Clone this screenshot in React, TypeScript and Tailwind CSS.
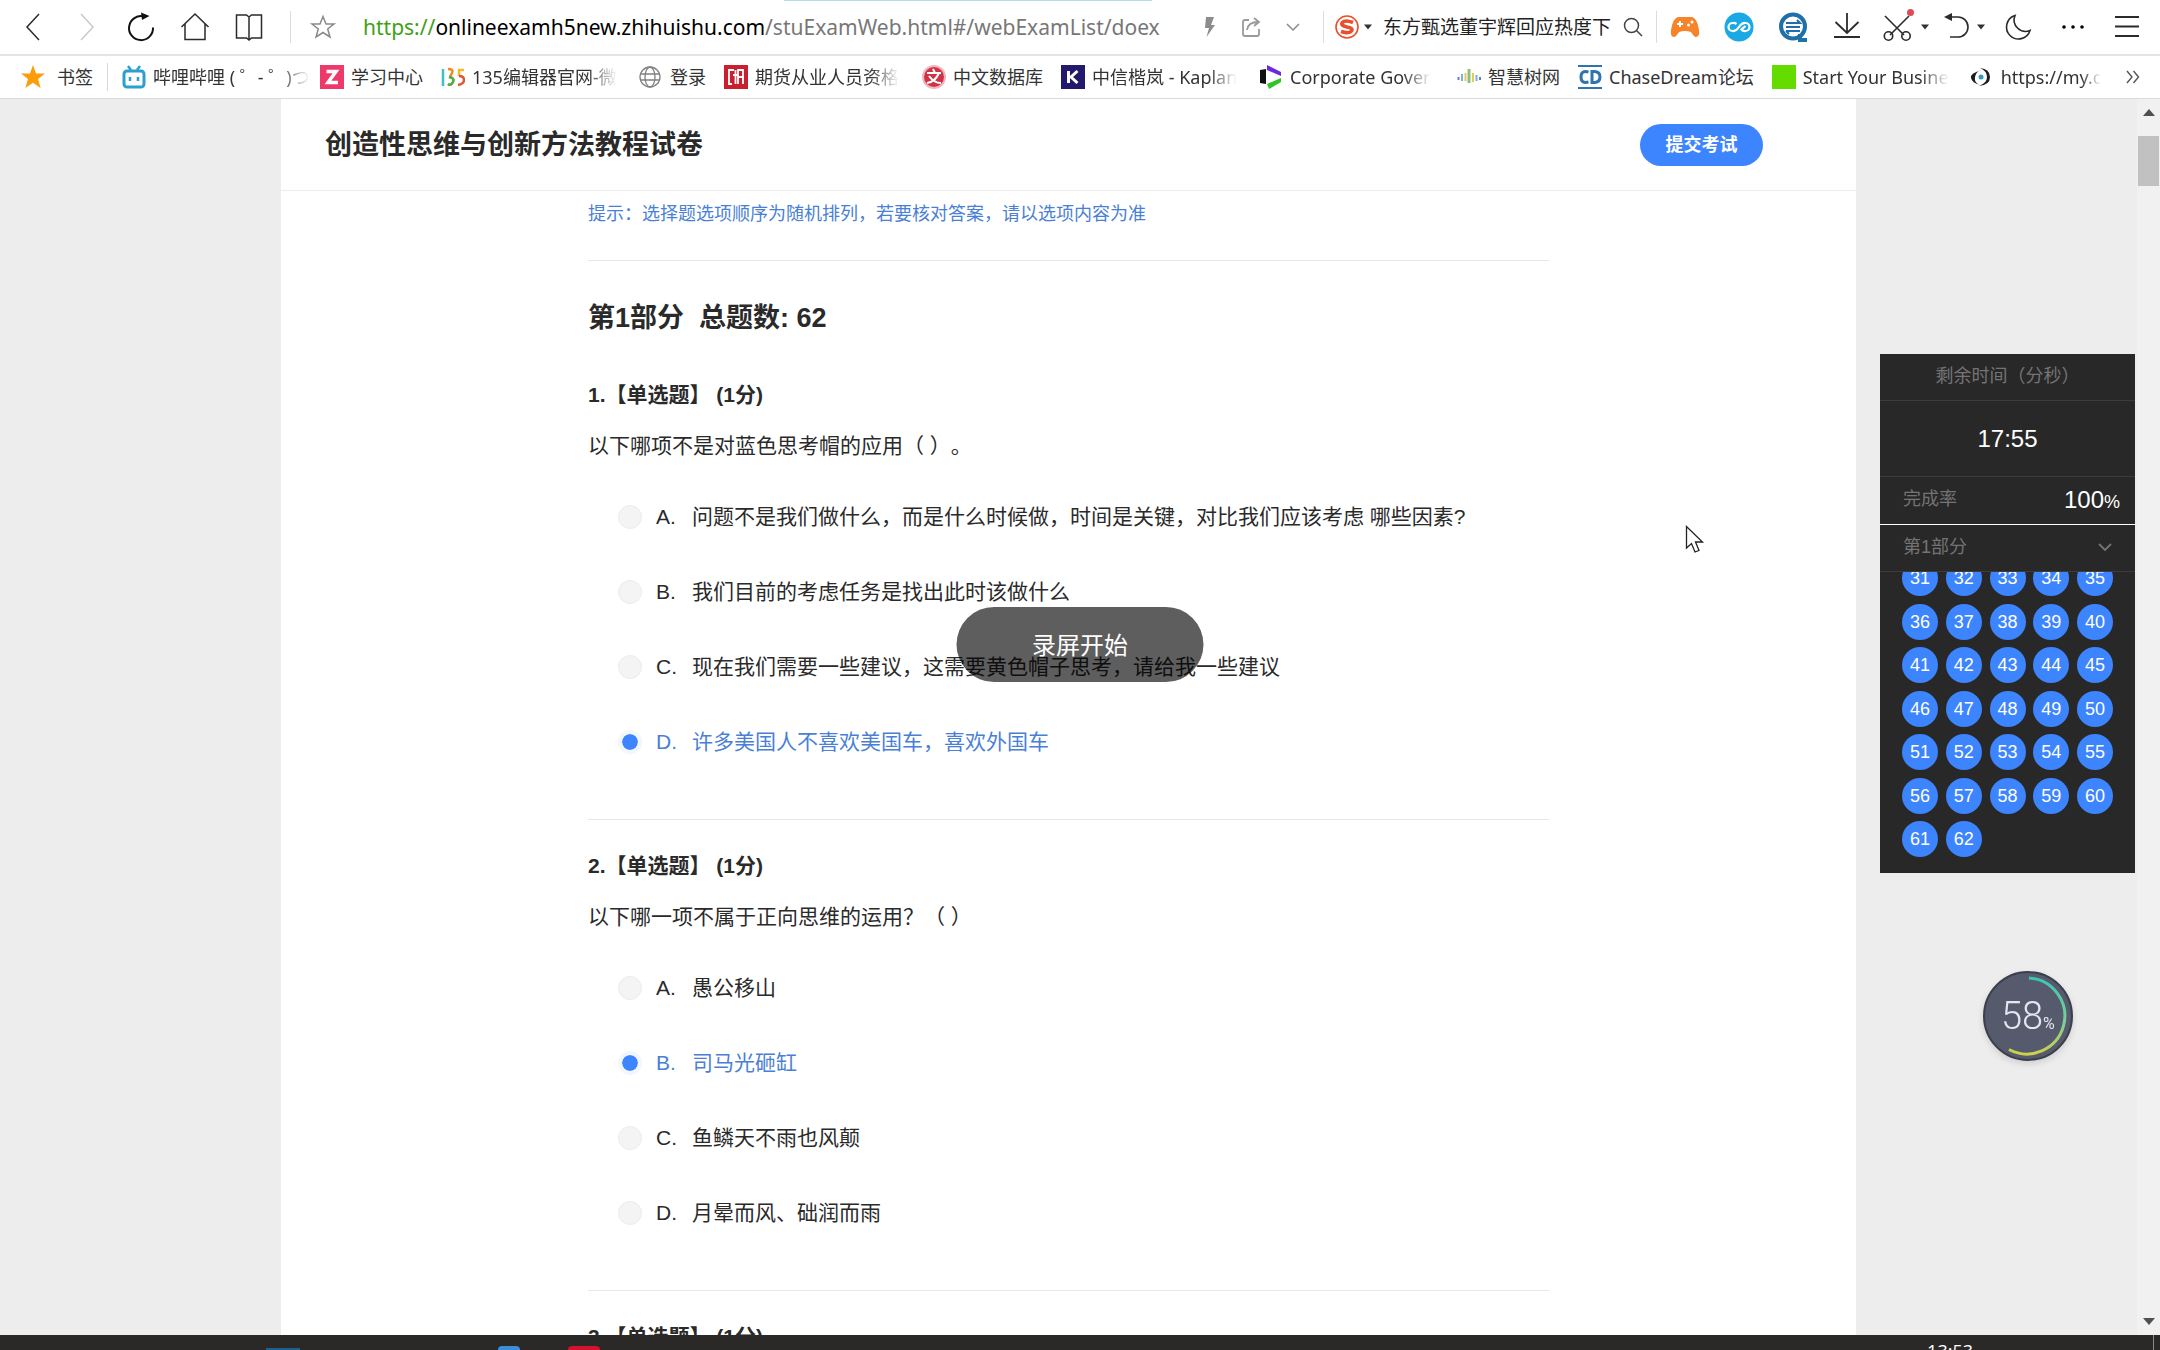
import { useState, type ReactNode } from "react";

type Option = { key: string; text: string };
type Question = { no: number; title: string; options: Option[]; answer: string };

const questions: Question[] = [
    {
        no: 1,
        title: "以下哪项不是对蓝色思考帽的应用（ ）。",
        answer: "D",
        options: [
            { key: "A", text: "问题不是我们做什么，而是什么时候做，时间是关键，对比我们应该考虑 哪些因素?" },
            { key: "B", text: "我们目前的考虑任务是找出此时该做什么" },
            { key: "C", text: "现在我们需要一些建议，这需要黄色帽子思考，请给我一些建议" },
            { key: "D", text: "许多美国人不喜欢美国车，喜欢外国车" },
        ],
    },
    {
        no: 2,
        title: "以下哪一项不属于正向思维的运用？（ ）",
        answer: "B",
        options: [
            { key: "A", text: "愚公移山" },
            { key: "B", text: "司马光砸缸" },
            { key: "C", text: "鱼鳞天不雨也风颠" },
            { key: "D", text: "月晕而风、础润而雨" },
        ],
    },
    { no: 3, title: "", answer: "", options: [] },
];

const cards = Array.from({ length: 32 }, (_, i) => i + 31);

/* ---------- browser chrome ---------- */

function ToolButton({ label, className = "", children }: { label: string; className?: string; children: ReactNode }) {
    return (
        <button aria-label={label} className={`flex h-[30px] shrink-0 items-center justify-center ${className}`}>
            {children}
        </button>
    );
}

function Line({ d, size = 30, color = "#2b2b2b", width = 1.5 }: { d: string; size?: number; color?: string; width?: number }) {
    return (
        <svg width={size} height="30" viewBox={`0 0 ${size} 30`} fill="none" stroke={color} strokeWidth={width}>
            <path d={d} />
        </svg>
    );
}

function Caret() {
    return (
        <svg width="10" height="6" viewBox="0 0 10 6" className="shrink-0">
            <path d="M1 0.5h8L5 5.5z" fill="#333" />
        </svg>
    );
}

function Divider() {
    return <div className="h-8 w-px shrink-0 bg-[#dcdcdc]" />;
}

function Toolbar() {
    return (
        <div className="flex h-[56px] shrink-0 items-center border-b-2 border-[#e4e4e4] bg-white pl-[18px] pr-[18px]">
            <div className="flex items-center gap-6">
                <ToolButton label="后退"><Line d="M21 2L9 15L21 28" /></ToolButton>
                <ToolButton label="前进"><Line d="M9 2L21 15L9 28" color="#c9c9c9" /></ToolButton>
                <ToolButton label="刷新">
                    <svg width="30" height="30" viewBox="0 0 30 30" fill="none">
                        <path d="M18 4.5A12 12 0 1 0 27 15.5" stroke="#111" strokeWidth="2" />
                        <path d="M15 0.5l8.5 3.5L16 8z" fill="#111" />
                    </svg>
                </ToolButton>
                <ToolButton label="主页"><Line d="M1.5 15L15 2L28.5 15M5 12V27.5H25V12" /></ToolButton>
                <ToolButton label="阅读">
                    <Line d="M15 5L12.500 3H2.500V26H12.500L15 28L17.500 26H27.500V3H17.500L15 5V28" />
                </ToolButton>
            </div>
            <div className="ml-[26px] mr-[18px]"><Divider /></div>
            <ToolButton label="收藏">
                <svg width="28" height="28" viewBox="0 0 28 28" fill="none" stroke="#8a8a8a" strokeWidth="1.5">
                    <path d="M14 3.500L17 11h8l-6.300 5 2.300 8L14 19.500 7 24l2.300-8L3 11h8z" />
                </svg>
            </ToolButton>
            <div className="ml-[26px] min-w-0 flex-1 overflow-hidden whitespace-nowrap text-[21px] leading-7 text-[#777]">
                <span className="text-[#3fa018]">https://</span>
                <span className="text-black">onlineexamh5new.zhihuishu.com</span>
                /stuExamWeb.html#/webExamList/doex
            </div>
            <div className="ml-[22px] flex items-center gap-3">
                <ToolButton label="极速模式">
                    <svg width="30" height="30" viewBox="0 0 30 30"><path d="M12 5h8l-3 8h4L12.500 25l2.500-9h-4z" fill="#8c8c8c" /></svg>
                </ToolButton>
                <ToolButton label="分享">
                    <Line color="#9a9a9a" width={1.8} d="M13 8H9Q7 8 7 10V22Q7 24 9 24H21Q23 24 23 22V17M11 18Q12 10 22 10M18 6L23 10L18 14" />
                </ToolButton>
                <ToolButton label="展开"><Line color="#8a8a8a" d="M9 12L15 18L21 12" /></ToolButton>
            </div>
            <div className="ml-[15px] mr-[11px]"><Divider /></div>
            <svg width="24" height="26" viewBox="0 0 24 26" fill="none" className="shrink-0">
                <circle cx="12" cy="13" r="11" stroke="#e8502d" strokeWidth="1.600" />
                <path d="M18 8.500Q10 5.500 7.500 8.500T12 13Q18.500 14 16.500 17T6 17.500" stroke="#e8502d" strokeWidth="3.600" />
            </svg>
            <div className="ml-1 mr-[10px]"><Caret /></div>
            <span className="whitespace-nowrap text-[19px] leading-7 text-[#222]">东方甄选董宇辉回应热度下</span>
            <ToolButton label="搜索" className="ml-3">
                <svg width="20" height="20" viewBox="0 0 20 20" fill="none" stroke="#444" strokeWidth="1.500">
                    <circle cx="8.500" cy="8.500" r="7" /><path d="M13.500 13.500L19 19" />
                </svg>
            </ToolButton>
            <div className="ml-[13px] mr-[13px]"><Divider /></div>
            <div className="flex items-center gap-6">
                <ToolButton label="游戏">
                    <svg width="30" height="30" viewBox="0 0 30 30">
                        <path d="M8 5H22Q27 6 29 18Q30 25 26 25Q24 25 21 20Q15 18 9 20Q6 25 4 25Q0 25 1 18Q3 6 8 5z" fill="#f5842a" />
                        <path d="M10 9v6M7 12h6" stroke="#fff" strokeWidth="2" />
                        <circle cx="22" cy="10" r="1.500" fill="#fff" /><circle cx="18.500" cy="13" r="1.500" fill="#fff" />
                    </svg>
                </ToolButton>
                <ToolButton label="网盘">
                    <svg width="30" height="30" viewBox="0 0 30 30" fill="none">
                        <circle cx="15" cy="15" r="14.500" fill="#1ba9e4" />
                        <path d="M12.500 12Q10.500 10.500 8.500 11A4 4 0 0 0 8.500 19Q12 19.500 15 15Q18 10.500 21.500 11A4 4 0 0 1 21.500 19Q19 19.500 17.500 17.500L21.500 14" stroke="#fff" strokeWidth="2.200" />
                    </svg>
                </ToolButton>
                <ToolButton label="翻译">
                    <svg width="30" height="30" viewBox="0 0 30 30" fill="none">
                        <circle cx="15" cy="14.500" r="12" stroke="#1f6fa8" strokeWidth="4" />
                        <path d="M22 22v6h7" stroke="#1f6fa8" strokeWidth="4" />
                        <path d="M8 11h14l-3-3M22 15H8M8 19h14M8 19l3 3" stroke="#1f6fa8" strokeWidth="2" />
                    </svg>
                </ToolButton>
                <ToolButton label="下载"><Line d="M15 1V20M3.500 10L15 21L26.500 10M2 25H28" width={1.8} /></ToolButton>
            </div>
            <div className="ml-[20px] flex items-center gap-[6px]">
                <ToolButton label="截图">
                    <svg width="32" height="36" viewBox="0 0 32 36" fill="none" stroke="#2b2b2b" strokeWidth="1.600">
                        <path d="M3 7L22 26M27 7L8 26" />
                        <circle cx="6.500" cy="27" r="4.200" /><circle cx="24" cy="27" r="4.200" />
                        <circle cx="28.500" cy="3.500" r="3.500" fill="#e04a55" stroke="none" />
                    </svg>
                </ToolButton>
                <Caret />
            </div>
            <div className="ml-[14px] flex items-center gap-[6px]">
                <ToolButton label="恢复">
                    <svg width="26" height="30" viewBox="0 0 26 30" fill="none">
                        <path d="M4 5H14A10 10 0 0 1 14 25H6" stroke="#2b2b2b" strokeWidth="1.600" />
                        <path d="M0 5L8 1v8z" fill="#2b2b2b" />
                    </svg>
                </ToolButton>
                <Caret />
            </div>
            <div className="ml-[18px] flex items-center gap-6">
                <ToolButton label="夜间"><Line width={1.6} d="M11 3.500A12 12 0 1 0 26 18.500A11.500 11.500 0 0 1 11 3.500z" /></ToolButton>
                <ToolButton label="更多">
                    <svg width="30" height="30" viewBox="0 0 30 30"><circle cx="6" cy="15" r="1.800" /><circle cx="15" cy="15" r="1.800" /><circle cx="24" cy="15" r="1.800" /></svg>
                </ToolButton>
                <ToolButton label="菜单"><Line width={1.8} d="M3 5H27M3 14.500H27M3 24H27" /></ToolButton>
            </div>
        </div>
    );
}

const bookmarks: { text: string; fade: boolean; icon: ReactNode }[] = [
    {
        text: "哔哩哔哩 ( ゜- ゜)つ", fade: true,
        icon: (
            <g fill="none" stroke="#2aa0cc">
                <rect x="2" y="6" width="20" height="16" rx="3" strokeWidth="3" />
                <path d="M6 1l3 4M18 1l-3 4" strokeWidth="2.500" />
                <path d="M8 12v4M16 12v4" strokeWidth="2.500" />
            </g>
        ),
    },
    { text: "学习中心", fade: false, icon: <><rect width="24" height="24" fill="#ee3a6a" /><path d="M6.500 6.500H16L8 17.500H18" stroke="#fff" strokeWidth="3.500" fill="none" /></> },
    {
        text: "135编辑器官网-微", fade: true,
        icon: (
            <g fill="none" strokeWidth="2.500">
                <path d="M2 4v17" stroke="#3fc0c8" />
                <path d="M7 4q6 0 4 4t-3 4q6 1 4 5t-5 2" stroke="#f08a24" />
                <path d="M8 12q6 1 4 5t-5 2" stroke="#4cb050" />
                <path d="M23 5h-5v6" stroke="#f5b92e" /><path d="M18 11q5 0 5 4t-6 5" stroke="#e05535" />
            </g>
        ),
    },
    {
        text: "登录", fade: false,
        icon: (
            <g fill="none" stroke="#808080" strokeWidth="1.300">
                <circle cx="11" cy="12" r="10" /><ellipse cx="11" cy="12" rx="5" ry="10" /><path d="M1.500 9h19M1.500 15h19" />
            </g>
        ),
    },
    { text: "期货从业人员资格", fade: true, icon: <><rect width="24" height="24" fill="#c8202f" /><path d="M10 5H5V19H8M9 10h5M11.500 5V19M14 19V5H19V19M14 12h5" stroke="#fff" strokeWidth="1.800" fill="none" /></> },
    {
        text: "中文数据库", fade: false,
        icon: <><circle cx="12" cy="12" r="12" fill="#f3b5bf" /><circle cx="12" cy="12" r="10" fill="#cf3348" /><path d="M5 8h14M11 4l2 4M17 8Q13 17 5 18M7 11Q12 18 19 18" stroke="#fff" strokeWidth="2" fill="none" /></>,
    },
    { text: "中信楷岚 - Kaplan", fade: true, icon: <><rect width="24" height="24" fill="#241a6b" /><path d="M7.500 6v12M16.500 6L10 12l6.500 6" stroke="#fff" strokeWidth="3" fill="none" /></> },
    { text: "Corporate Gover", fade: true, icon: <><path d="M1 5L7 4V19L1 18z" fill="#111" /><path d="M8 0L22 7V11L8 5z" fill="#6a2ae0" /><path d="M22 13V17L10 24L8 19z" fill="#30c526" /></> },
    {
        text: "智慧树网", fade: false,
        icon: (
            <g fill="none" strokeWidth="2">
                <path d="M1.500 12v3M23 12v3" stroke="#6a7fc0" /><path d="M5 9v7M19.500 10v6" stroke="#7fb2d8" />
                <path d="M8.500 8v8M16 8v9" stroke="#e3c95a" /><path d="M12 4v14" stroke="#8ec07a" strokeWidth="3" />
            </g>
        ),
    },
    {
        text: "ChaseDream论坛", fade: false,
        icon: <g fill="none" stroke="#2f74ad"><path d="M0 1h24M0 23h24" strokeWidth="2" /><path d="M10.500 7Q3 5 3 12T10.500 17M14 6.500V17.500H17Q22 17 22 12T17 6.500z" strokeWidth="3" /></g>,
    },
    { text: "Start Your Busine", fade: true, icon: <rect width="24" height="24" fill="#64dc00" /> },
    {
        text: "https://my.c", fade: true,
        icon: <><path d="M12 5Q6 6 5 12T10 20Q2 18 1 13T12 5zM10 3Q20 4 20 12T9 21Q17 18 17 12T10 3z" fill="#1c1c1c" /><circle cx="11" cy="12" r="2.500" fill="#2f9fb5" /></>,
    },
];

function BookmarkBar() {
    return (
        <nav className="flex h-[43px] shrink-0 items-center border-b border-[#dadada] bg-white pl-[21px] pr-[20px] text-[18px] leading-7 text-[#333]">
            <svg width="24" height="24" viewBox="0 0 24 24" className="shrink-0">
                <path d="M12 0l3 8.500h9l-7 5.500 2.600 9L12 17.700 4.400 23 7 14 0 8.500h9z" fill="#fb9d0b" />
            </svg>
            <span className="ml-3 shrink-0">书签</span>
            <div className="mx-[14px] h-7 w-px shrink-0 bg-[#d8d8d8]" />
            <div className="flex min-w-0 flex-1 gap-[18px]">
                {bookmarks.map((b) => (
                    <a key={b.text} href="#" className={`flex shrink-0 items-center gap-[7px] ${b.fade ? "w-[180px] last:w-auto" : ""}`}>
                        <svg width="24" height="24" viewBox="0 0 24 24" className="shrink-0">{b.icon}</svg>
                        <span className={`whitespace-nowrap ${b.fade ? "[mask-image:linear-gradient(to_right,black_80%,transparent)]" : ""}`}>
                            {b.text}
                        </span>
                    </a>
                ))}
            </div>
            <button aria-label="更多书签" className="ml-5 shrink-0">
                <svg width="14" height="14" viewBox="0 0 14 14" fill="none" stroke="#555" strokeWidth="1.400">
                    <path d="M1 1l5 6-5 6M7.500 1l5 6-5 6" />
                </svg>
            </button>
        </nav>
    );
}

/* ---------- exam paper ---------- */

function QuestionBlock({ q }: { q: Question }) {
    const [answer, setAnswer] = useState(q.answer);

    return (
        <fieldset className="border-b border-[#e8e8e8] pb-10">
            <legend className="text-[21px] font-bold leading-[30px] text-[#2a2a2a]">{q.no}.【单选题】 (1分)</legend>
            <p className="mt-[21px] h-[30px] text-[21px] leading-[30px] text-[#2a2a2a]">{q.title}</p>
            <div className="mt-[18px] pl-[30px]">
                {q.options.map((o) => {
                    const checked = answer === o.key;
                    return (
                        <label key={o.key} className={`flex h-[75px] items-center text-[21px] leading-[30px] ${checked ? "text-[#4a7fd6]" : "text-[#2a2a2a]"}`}>
                            <input
                                type="radio"
                                name={`q${q.no}`}
                                checked={checked}
                                onChange={() => setAnswer(o.key)}
                                className="size-6 shrink-0 appearance-none rounded-full border border-[#ececec] bg-[#f4f4f4] checked:border-4 checked:border-[#f1f6ff] checked:bg-[#3d84ff] checked:bg-clip-padding"
                            />
                            <span className="ml-[14px] w-9">{o.key}.</span>
                            <span>{o.text}</span>
                        </label>
                    );
                })}
            </div>
        </fieldset>
    );
}

function AnswerCard() {
    return (
        <aside className="absolute right-[2px] top-[255px] flex w-[255px] flex-col bg-[#282828] text-[18px] text-[#747474]">
            <div className="h-[47px] border-b border-[#3c3c3c] text-center leading-[44px]">剩余时间（分秒）</div>
            <div className="h-[76px] border-b border-[#3c3c3c] text-center text-[24px] leading-[76px] text-white">17:55</div>
            <div className="flex h-[48px] items-center justify-between border-b border-white pb-[2px] pl-[23px] pr-[15px]">
                <span>完成率</span>
                <span className="text-[24px] text-white">100<span className="text-[18px]">%</span></span>
            </div>
            <button className="flex h-[47px] items-center justify-between border-b border-[#3c3c3c] px-[23px] pb-[2px]">
                <span>第1部分</span>
                <svg width="14" height="10" viewBox="0 0 14 10" fill="none" stroke="#747474" strokeWidth="1.800">
                    <path d="M1 2l6 6 6-6" />
                </svg>
            </button>
            <div className="flex h-[301px] flex-col justify-end overflow-hidden px-[22px] pb-4">
                <div className="grid h-[297px] shrink-0 grid-cols-[repeat(5,36px)] content-between justify-between">
                    {cards.map((n) => (
                        <button key={n} className="size-9 rounded-full bg-[#3d84ff] text-center leading-9 text-white">{n}</button>
                    ))}
                </div>
            </div>
        </aside>
    );
}

function SpeedBall() {
    return (
        <svg width="110" height="110" viewBox="-55 -55 110 110" className="absolute bottom-[264px] right-[54px] drop-shadow-md">
            <defs>
                <linearGradient id="arc" x1="0" y1="0" x2="0" y2="1">
                    <stop offset="0" stopColor="#3fc4b4" />
                    <stop offset="0.600" stopColor="#7fce94" />
                    <stop offset="1" stopColor="#cfd04a" />
                </linearGradient>
            </defs>
            <circle r="44" fill="#555b6c" stroke="#3c404c" strokeWidth="2" />
            <path d="M1-38A38 38 0 1 1-19 33.500" fill="none" stroke="url(#arc)" strokeWidth="3" />
            <text x="-27" y="13" fontSize="38" fontFamily="Roboto, sans-serif" fontWeight="300" fill="#e3e6ef">58</text>
            <text x="15" y="13" fontSize="16" fontFamily="Roboto, sans-serif" fill="#e3e6ef">%</text>
        </svg>
    );
}

function Scrollbar() {
    return (
        <div className="flex w-[23px] shrink-0 flex-col items-center bg-[#f1f1f1] py-[10px]">
            <svg width="12" height="7" viewBox="0 0 12 7"><path d="M0 7h12L6 0z" fill="#505050" /></svg>
            <div className="mt-[20px] h-[50px] w-[21px] bg-[#c1c1c1]" />
            <svg width="12" height="7" viewBox="0 0 12 7" className="mt-auto"><path d="M0 0h12L6 7z" fill="#505050" /></svg>
        </div>
    );
}

function Taskbar() {
    return (
        <footer className="relative h-[15px] shrink-0 overflow-hidden bg-[#2a2928] text-white">
            <div className="flex h-full items-end">
                <div className="ml-[266px] h-[2px] w-[34px] bg-[#1d5f8f]" />
                <div className="ml-[198px] h-1 w-[22px] rounded-t-full bg-[#3a8fd8]" />
                <div className="ml-[48px] h-1 w-8 rounded-t-sm bg-[#d3122c]" />
            </div>
            <span className="absolute right-[187px] top-[4px] font-['Open_Sans',sans-serif] text-[18px] leading-6">13:53</span>
            <div className="absolute right-[6px] top-0 h-full w-px bg-[#8a8a8a]" />
        </footer>
    );
}

export default function App() {
    return (
        <div className="relative flex h-screen flex-col overflow-hidden bg-[#ededed] font-['Liberation_Sans','Noto_Sans_CJK_SC',sans-serif] [text-spacing-trim:space-all]">
            <div className="absolute left-[784px] top-0 h-px w-[368px] bg-[#b3dcef]" />
            <header className="font-['Noto_Sans','Noto_Sans_CJK_SC',sans-serif]">
                <Toolbar />
                <BookmarkBar />
            </header>

            <div className="flex min-h-0 flex-1">
                <div className="relative min-w-0 flex-1">
                    <main className="mx-auto flex h-full w-full max-w-[1575px] flex-col overflow-hidden bg-white">
                        <div className="flex h-[92px] shrink-0 items-center justify-between border-b border-[#ececec] pl-11 pr-[93px]">
                            <h1 className="text-[27px] font-bold leading-9 text-[#2a2a2a]">创造性思维与创新方法教程试卷</h1>
                            <button className="h-[42px] w-[123px] rounded-full bg-[#3d84ff] pt-[2px] text-[18px] font-bold text-white">提交考试</button>
                        </div>
                        <div className="mx-auto min-h-0 w-full max-w-[961px] flex-1 overflow-hidden">
                            <p className="border-b border-[#e8e8e8] pb-8 pt-[9px] text-[18px] leading-7 text-[#4a7fd6]">
                                提示：选择题选项顺序为随机排列，若要核对答案，请以选项内容为准
                            </p>
                            <h2 className="mb-[44px] mt-[39px] whitespace-pre text-[27px] font-bold leading-9 text-[#2a2a2a]">{"第1部分  总题数: 62"}</h2>
                            <div className="flex flex-col gap-[31px]">
                                {questions.map((q) => <QuestionBlock key={q.no} q={q} />)}
                            </div>
                        </div>
                    </main>
                    <AnswerCard />
                    <SpeedBall />
                </div>
                <Scrollbar />
            </div>

            <Taskbar />

            {/* screen recorder toast */}
            <div role="status" className="absolute left-1/2 top-[607px] h-[75px] w-[247px] -translate-x-1/2 rounded-full bg-black/63 text-center text-[24px] leading-[78px] text-white">
                录屏开始
            </div>

            <svg width="20" height="30" viewBox="0 0 20 30" className="absolute left-[1685px] top-[525px]">
                <path d="M1.500 1.500V23l5-4.500 3.500 8.500 4-1.500-3.500-8.500h7z" fill="#fff" stroke="#222" strokeWidth="1.300" />
            </svg>
        </div>
    );
}
